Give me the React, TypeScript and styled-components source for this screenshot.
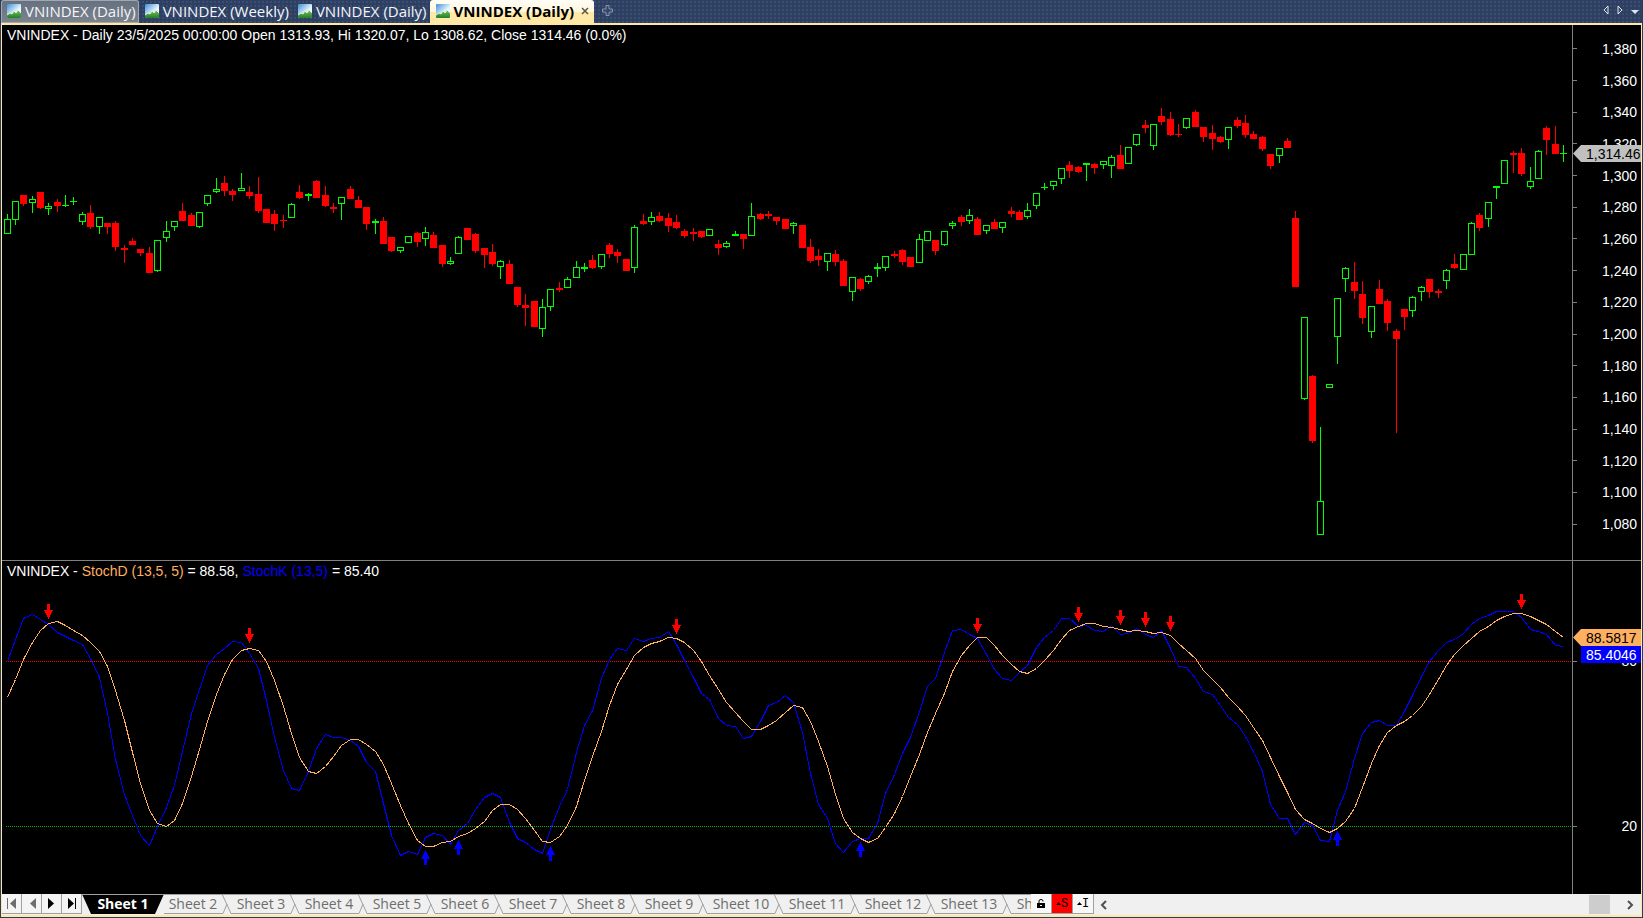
import React from "react";
import styled, { createGlobalStyle, css } from "styled-components";

const GlobalStyle = createGlobalStyle`
  *, *::before, *::after { box-sizing: border-box; }
  html, body { margin: 0; padding: 0; background: #2b3c5b; }
  button { font: inherit; color: inherit; border: 0; padding: 0; margin: 0; background: none; cursor: pointer; }
`;

const UI_FONT = `"Open Sans", "Noto Sans", sans-serif`;
const CHART_FONT = `"Liberation Sans", Arial, sans-serif`;

/* ---------- data ---------- */

// "g" = rising (hollow), "r" = falling (solid); open/close body then high/low wick
type Candle = ["g" | "r", number, number, number, number];

const CANDLES: Candle[] = [
  ["g",219,234,214,234],["g",201,220,201,225],["r",195,204,195,206],["g",199,203,196,213],["r",192,208,192,209],
  ["g",206,209,203,215],["r",202,206,199,212],["g",205,206,195,207],["g",201,202,197,205],["g",214,222,212,225],
  ["r",213,227,205,229],["g",217,227,217,234],["r",223,227,223,234],["r",223,247,221,251],["r",248,250,245,263],
  ["r",241,245,238,245],["r",249,253,249,256],["r",253,273,247,273],["g",240,271,240,272],["g",231,238,221,242],
  ["g",221,227,221,231],["r",211,221,203,221],["r",215,226,213,226],["g",212,227,212,228],["g",195,204,195,206],
  ["g",189,192,178,193],["r",183,191,176,196],["r",191,195,189,201],["g",188,191,173,191],["r",192,196,186,199],
  ["r",194,211,177,213],["r",209,223,209,223],["r",214,224,210,231],["r",220,221,215,228],["g",204,218,203,218],
  ["r",192,198,185,199],["g",194,196,193,201],["r",181,198,180,198],["r",195,206,186,207],["r",207,209,203,213],
  ["g",197,204,197,220],["r",189,199,186,199],["r",200,208,196,208],["r",207,224,207,230],["g",221,223,219,234],
  ["r",221,244,217,244],["r",237,251,237,252],["g",247,251,247,253],["g",236,243,236,243],["r",233,242,232,247],
  ["g",232,239,227,246],["r",235,248,232,248],["r",245,264,245,267],["g",261,264,257,265],["g",237,254,236,254],
  ["r",228,240,228,240],["r",234,251,233,253],["r",248,255,248,268],["r",252,264,244,266],["g",261,267,260,279],
  ["r",264,284,260,284],["r",287,305,287,307],["r",305,308,294,326],["r",301,327,301,327],["g",307,329,299,337],
  ["g",289,307,289,311],["r",288,290,282,292],["g",279,288,277,288],["g",267,278,261,278],["g",267,269,263,272],
  ["r",260,268,255,269],["g",254,267,254,269],["r",245,254,243,258],["r",252,256,249,263],["r",259,271,259,271],
  ["g",227,268,225,273],["r",221,224,214,225],["g",217,222,212,225],["r",216,221,212,222],["r",218,226,213,232],
  ["r",222,228,215,229],["r",231,236,229,238],["r",232,234,228,241],["r",231,237,231,238],["g",229,236,229,236],
  ["r",244,248,240,255],["g",243,247,241,248],["g",234,236,231,236],["r",234,239,234,249],["g",216,236,203,236],
  ["r",214,219,213,220],["r",214,216,211,219],["r",217,221,217,225],["r",219,229,219,229],["g",223,226,222,234],
  ["r",225,248,225,248],["r",247,261,239,263],["r",256,260,249,266],["g",253,262,253,271],["r",254,262,250,266],
  ["r",261,286,259,286],["g",277,292,277,301],["r",279,289,278,291],["g",276,282,275,284],["g",267,269,263,277],
  ["g",256,268,256,271],["r",254,256,251,258],["r",250,262,249,265],["r",257,267,257,267],["g",239,263,234,263],
  ["g",231,241,231,241],["r",240,251,240,255],["g",231,245,231,246],["g",223,226,221,229],["r",217,222,215,226],
  ["g",215,221,209,224],["r",219,235,217,235],["g",225,231,225,234],["r",222,229,219,229],["g",222,228,222,233],
  ["r",211,214,207,217],["r",212,220,210,220],["g",210,217,203,219],["g",193,206,193,209],["g",187,188,183,190],
  ["g",181,186,181,190],["g",168,179,168,184],["r",165,171,161,178],["r",167,172,166,173],["g",163,165,163,181],
  ["r",164,168,163,174],["g",161,165,161,169],["g",157,166,155,178],["r",155,169,145,169],["g",147,164,147,164],
  ["g",134,145,134,146],["r",125,128,120,133],["g",124,146,124,150],["r",116,122,108,125],["r",119,135,112,136],
  ["r",134,135,124,137],["g",118,128,118,129],["r",112,127,110,127],["r",127,137,127,142],["r",133,139,125,150],
  ["r",137,142,136,143],["g",127,140,127,149],["r",120,126,117,128],["r",123,135,115,138],["r",134,139,131,139],
  ["r",137,149,136,151],["r",154,166,154,169],["g",148,156,148,163],["r",141,148,138,148],["r",218,287,211,287],
  ["g",317,399,317,400],["r",376,441,375,443],["g",501,535,427,535],["g",384,388,384,388],["g",298,337,298,364],
  ["g",268,279,267,292],["r",282,291,262,299],["r",294,318,281,324],["g",306,332,306,338],["r",289,304,280,304],
  ["r",301,323,299,331],["r",331,339,329,433],["r",309,317,309,330],["g",297,311,296,317],["g",287,292,286,301],
  ["r",279,292,279,298],["r",291,293,289,298],["g",270,281,269,289],["r",264,268,254,269],["g",254,270,254,270],
  ["g",223,255,222,255],["r",215,228,213,231],["g",202,219,202,227],["g",186,188,186,199],["g",160,184,160,184],
  ["r",153,155,151,173],["r",153,174,148,176],["g",181,187,167,189],["g",151,179,150,179],["r",128,140,126,155],
  ["r",144,154,126,154],["g",153,154,145,162],
];

const STOCH_K = [
  661,639,618,614,619,624,632,636,640,644,658,677,713,759,794,815,835,845,826,807,785,751,713,689,665,
  654,648,641,642,653,668,700,737,770,788,790,771,748,734,737,737,740,746,762,771,803,835,855,851,854,
  837,833,835,844,830,823,809,797,793,797,822,838,842,849,853,829,806,789,752,725,710,678,659,648,650,
  638,641,638,637,631,644,660,677,693,699,718,725,726,738,736,721,705,702,695,702,732,773,804,818,843,
  852,841,838,838,823,793,774,753,737,711,686,678,652,630,629,634,638,654,669,678,680,672,665,647,637,
  630,618,618,626,625,630,631,625,634,633,628,634,637,630,648,666,667,678,691,694,705,717,724,736,751,
  771,804,818,818,834,822,825,840,841,810,791,758,733,722,720,725,725,711,695,676,661,650,642,639,633,
  624,618,615,611,611,611,617,629,631,634,645,646,
];

// The slow line is the five-bar mean of the fast one; the first bars need a seed.
const STOCH_D = STOCH_K.map((_, i) =>
  i < 4
    ? [697, 679, 659, 642][i]
    : Math.round(STOCH_K.slice(i - 4, i + 1).reduce((a, b) => a + b, 0) / 5)
);

const SELL_SIGNALS: [number, number][] = [
  [5,604],[29,628],[80,619],[116,618],[128,607],[133,610],[136,612],[139,616],[181,594],
];
const BUY_SIGNALS: [number, number][] = [[50,850],[54,840],[65,846],[102,842],[159,831]];

const PRICE_LEVELS = Array.from({ length: 16 }, (_, i) => (1380 - i * 20).toLocaleString("en-US"));

// 19 bars take 159 units of width
const barX = (i: number) => 7 + Math.floor((i * 159) / 19);
const linePoints = (ys: number[]) => ys.map((y, i) => `${barX(i) + 0.5},${y + 0.5}`).join(" ");

/* ---------- frame ---------- */

const Frame = styled.main`
  display: flex;
  flex-direction: column;
  height: 100vh;
  min-height: 480px;
  overflow: hidden;
  padding: 0 1px 1px;
  background: #2b3c5b;
`;

const TabStrip = styled.header`
  display: flex;
  flex: none;
  height: 23px;
  align-items: stretch;
  background-color: #2e4061;
  background-image: radial-gradient(#3a4d72 1px, transparent 1px);
  background-size: 4px 4px;
  font: 15px/20px ${UI_FONT};
  color: #f4f6fa;
`;

const DocTab = styled.button<{ $look: "hover" | "plain" | "active" }>`
  display: flex;
  align-items: center;
  gap: 4px;
  padding: 0 3px 2px 6px;
  white-space: nowrap;
  ${(p) =>
    p.$look === "hover" &&
    css`
      border-radius: 3px 3px 0 0;
      background: linear-gradient(#66707f, #7b838c);
      box-shadow: inset 0 0 0 1px #a0a8b3;
    `}
  ${(p) =>
    p.$look === "active" &&
    css`
      border-radius: 3px 3px 0 0;
      background: linear-gradient(#fffdf6 0, #fff6dc 50%, #ffe9a8 51%, #ffe8a6 100%);
      color: #000;
      font-weight: 700;
    `}
`;

const CloseMark = styled.svg`
  margin: 0 2px 0 3px;
`;

const AddTab = styled.button`
  display: flex;
  align-items: center;
  padding: 0 8px 2px;
`;

const StripTools = styled.div`
  display: flex;
  align-items: center;
  gap: 8px;
  margin-left: auto;
  padding: 0 3px 3px 0;
`;

const ToolButton = styled.button`
  display: flex;
`;

const Workspace = styled.section`
  display: flex;
  flex: 1;
  min-height: 0;
  flex-direction: column;
  border: solid #ffe8a6;
  border-width: 2px 1px;
  background: #000;
`;

/* ---------- chart panes ---------- */

const Pane = styled.section<{ $weight: number; $divided?: boolean }>`
  display: grid;
  grid-template-columns: minmax(0, 1fr) 69px;
  flex: ${(p) => p.$weight} 1 0;
  min-height: 0;
  color: #fff;
  font: 14px/20px ${CHART_FONT};
  ${(p) => p.$divided && css`border-top: 1px solid #808080;`}
`;

const Plot = styled.div`
  position: relative;
  min-width: 0;
  min-height: 0;
`;

const PlotCanvas = styled.svg`
  position: absolute;
  inset: 0;
  width: 100%;
  height: 100%;
  shape-rendering: crispEdges;
`;

const PaneTitle = styled.h2`
  position: relative;
  margin: 0;
  padding-left: 5px;
  font: inherit;
  white-space: nowrap;
`;

const SeriesName = styled.span<{ $color: string }>`
  color: ${(p) => p.$color};
`;

const Axis = styled.div<{ $rows: string }>`
  position: relative;
  display: grid;
  grid-template-rows: ${(p) => p.$rows};
  min-height: 0;
  border-left: 1px solid #808080;
`;

const Scale = styled.ol`
  display: flex;
  flex-direction: column;
  justify-content: space-between;
  grid-row: 2;
  margin: 0;
  padding: 0;
  list-style: none;
`;

const Level = styled.li<{ $fill?: boolean }>`
  display: flex;
  flex: ${(p) => (p.$fill ? "1 1 0" : "none")};
  align-items: center;
  justify-content: space-between;
  height: 22px;
  padding-right: 4px;
  &::before {
    content: "";
    width: 4px;
    height: 1px;
    background: #808080;
  }
`;

const TagStack = styled.div`
  position: absolute;
  left: 0;
  right: 0;
  margin-top: -9px;
`;

const ValueTag = styled.div<{ $bg: string; $fg: string; $pointer?: boolean }>`
  height: 17px;
  padding-left: 13px;
  line-height: 18px;
  white-space: nowrap;
  color: ${(p) => p.$fg};
  background: ${(p) => p.$bg};
  clip-path: ${(p) =>
    p.$pointer
      ? "polygon(0 50%, 8px 0, 100% 0, 100% 100%, 8px 100%)"
      : "polygon(8px 0, 100% 0, 100% 100%, 8px 100%)"};
`;

/* ---------- sheet bar ---------- */

const SheetBar = styled.footer`
  display: flex;
  flex: none;
  height: 21px;
  background: #f0f0f0;
  font: 14px/18px ${UI_FONT};
  color: #6d6d6d;
`;

const NavButton = styled.button`
  display: flex;
  align-items: center;
  justify-content: center;
  width: 20px;
  height: 20px;
  border: solid #a0a0a0;
  border-width: 0 1px 1px 0;
  background: #f4f4f4;
`;

const SheetTabs = styled.nav`
  display: flex;
  flex: none;
  width: 949px;
  height: 20px;
  overflow: hidden;
  border-top: 1px solid #a0a0a0;
`;

const SheetTab = styled.button<{ $long?: boolean }>`
  flex: none;
  width: ${(p) => (p.$long ? 66 : 58)}px;
  border-bottom: 1px solid #a0a0a0;
  text-align: center;
  white-space: nowrap;
`;

const CurrentSheet = styled.button`
  flex: none;
  width: 82px;
  margin-top: -1px;
  background: #000;
  clip-path: polygon(0 0, 100% 0, calc(100% - 9px) 100%, 9px 100%);
  color: #fff;
  font-weight: 700;
`;

const Slant = styled.svg`
  flex: none;
`;

const ToggleButton = styled.button<{ $alert?: boolean }>`
  display: flex;
  align-items: center;
  justify-content: center;
  width: 21px;
  height: 20px;
  border: solid #a0a0a0;
  border-width: 0 1px 1px 0;
  background: ${(p) => (p.$alert ? "#ff0000" : "#f8f8f8")};
  color: #000;
  font: 12px/18px "Liberation Mono", monospace;
`;

const ScrollTrack = styled.div`
  display: flex;
  flex: 1;
  align-items: center;
  justify-content: space-between;
  padding: 1px 7px 1px 6px;
`;

const ScrollEnd = styled.div`
  display: flex;
  gap: 17px;
  align-items: center;
`;

const ScrollThumb = styled.div`
  width: 21px;
  height: 19px;
  background: #cdcdcd;
`;

/* ---------- drawings ---------- */

const ChartIcon = () => (
  <svg width="14" height="14" viewBox="0 0 14 14" aria-hidden="true">
    <defs>
      <linearGradient id="sky" x1="0" y1="0" x2="1" y2="1">
        <stop offset="0" stopColor="#3f8fd8" />
        <stop offset="0.6" stopColor="#e8f6ff" />
        <stop offset="1" stopColor="#ffffff" />
      </linearGradient>
      <linearGradient id="hill" x1="0" y1="0" x2="0" y2="1">
        <stop offset="0" stopColor="#7cc84c" />
        <stop offset="1" stopColor="#1f7d2c" />
      </linearGradient>
    </defs>
    <rect width="14" height="14" rx="1" fill="url(#sky)" />
    <path d="M0 11 L3 9 L5 10 L7 7 L9 9 L11 6 L14 9 V13 Q14 14 13 14 H1 Q0 14 0 13Z" fill="url(#hill)" />
    <path d="M0 11 L3 9 L5 10 L7 7 L9 9 L11 6 L14 9" fill="none" stroke="#d9f0e4" strokeWidth="1" />
  </svg>
);

const NavIcon = ({ kind }: { kind: "first" | "prev" | "next" | "last" }) => {
  const back = kind === "first" || kind === "prev";
  return (
    <svg width="10" height="11" viewBox="0 0 10 11" fill={back ? "#6d6d6d" : "#000"} aria-hidden="true">
      {back ? <path d="M9 0V11L3 5.5Z" /> : <path d="M1 0V11L7 5.5Z" />}
      {kind === "first" && <rect x="0" width="1" height="11" />}
      {kind === "last" && <rect x="8" width="1" height="11" />}
    </svg>
  );
};

const Candlestick = ({ index, candle }: { index: number; candle: Candle }) => {
  const [dir, top, bottom, high, low] = candle;
  const x = barX(index);
  const color = dir === "g" ? "#00ff00" : "#ff0000";
  return (
    <g fill={color}>
      {high < top && <rect x={x} y={high} width="1" height={top - high} />}
      {low > bottom && <rect x={x} y={bottom} width="1" height={low - bottom} />}
      <rect x={x - 3} y={top} width="7" height={bottom - top} />
      {dir === "g" && bottom - top > 2 && (
        <rect x={x - 2} y={top + 1} width="5" height={bottom - top - 2} fill="#000" />
      )}
    </g>
  );
};

const SellArrow = ({ x, y }: { x: number; y: number }) => (
  <path
    fill="#ff0000"
    d={`M${x - 1} ${y}h3v6h3v1h-1v2h-1v2h-1v2h-1v2h-1v-2h-1v-2h-1v-2h-1v-2h-1v-1h3z`}
  />
);

const BuyArrow = ({ x, y }: { x: number; y: number }) => (
  <path
    fill="#0000ff"
    d={`M${x} ${y}h1v2h1v2h1v2h1v2h1v1h-3v6h-3v-6h-3v-1h1v-2h1v-2h1v-2h1z`}
  />
);

const PricePane = () => (
  <Pane $weight={535}>
    <Plot>
      <PlotCanvas viewBox="2 25 1570 535" preserveAspectRatio="none" role="img" aria-label="Daily candles">
        {CANDLES.map((c, i) => (
          <Candlestick key={i} index={i} candle={c} />
        ))}
      </PlotCanvas>
      <PaneTitle>
        VNINDEX - Daily 23/5/2025 00:00:00 Open 1313.93, Hi 1320.07, Lo 1308.62, Close 1314.46 (0.0%)
      </PaneTitle>
    </Plot>
    <Axis $rows="8fr 507fr 20fr">
      <Scale>
        {PRICE_LEVELS.map((p) => (
          <Level key={p} $fill>
            {p}
          </Level>
        ))}
      </Scale>
      <TagStack style={{ top: `${(129 / 535) * 100}%` }}>
        <ValueTag $bg="#c0c0c0" $fg="#000" $pointer>
          1,314.46
        </ValueTag>
      </TagStack>
    </Axis>
  </Pane>
);

const StochPane = () => (
  <Pane $weight={333} $divided>
    <Plot>
      <PlotCanvas viewBox="2 561 1570 333" preserveAspectRatio="none" role="img" aria-label="Stochastic oscillator">
        <line x1="6" x2="1572" y1="661.5" y2="661.5" stroke="#ff0000" strokeDasharray="1 1" />
        <line x1="6" x2="1572" y1="826.5" y2="826.5" stroke="#00b400" strokeDasharray="1 1" />
        <polyline points={linePoints(STOCH_K)} fill="none" stroke="#0000ff" />
        <polyline points={linePoints(STOCH_D)} fill="none" stroke="#ffaf60" />
        {SELL_SIGNALS.map(([i, y]) => (
          <SellArrow key={i} x={barX(i)} y={y} />
        ))}
        {BUY_SIGNALS.map(([i, y]) => (
          <BuyArrow key={i} x={barX(i)} y={y} />
        ))}
      </PlotCanvas>
      <PaneTitle>
        VNINDEX - <SeriesName $color="#ffaf60">StochD (13,5, 5)</SeriesName> = 88.58,{" "}
        <SeriesName $color="#0000ff">StochK (13,5)</SeriesName> = 85.40
      </PaneTitle>
    </Plot>
    <Axis $rows="89fr 187fr 57fr">
      <Scale>
        <Level>80</Level>
        <Level>20</Level>
      </Scale>
      <TagStack style={{ top: `${(77 / 333) * 100}%` }}>
        <ValueTag $bg="#ffaf60" $fg="#000" $pointer>
          88.5817
        </ValueTag>
        <ValueTag $bg="#0000ff" $fg="#fff">
          85.4046
        </ValueTag>
      </TagStack>
    </Axis>
  </Pane>
);

const SheetEdge = () => (
  <Slant width="10" height="19" viewBox="0 0 10 19" fill="none" stroke="#a0a0a0" aria-hidden="true">
    <path d="M0.500 0L9 18.500H10M0 18.500H1L5 9" />
  </Slant>
);

const App = () => (
  <Frame>
    <GlobalStyle />
    <TabStrip>
      <DocTab $look="hover"><ChartIcon />VNINDEX (Daily)</DocTab>
      <DocTab $look="plain"><ChartIcon />VNINDEX (Weekly)</DocTab>
      <DocTab $look="plain"><ChartIcon />VNINDEX (Daily)</DocTab>
      <DocTab $look="active">
        <ChartIcon />
        VNINDEX (Daily)
        <CloseMark width="8" height="8" viewBox="0 0 8 8" stroke="#5c5540" strokeWidth="1.500" aria-hidden="true">
          <path d="M1 1L7 7M7 1L1 7" />
        </CloseMark>
      </DocTab>
      <AddTab aria-label="New tab">
        <svg width="11" height="11" viewBox="0 0 11 11" fill="none" stroke="#8b96aa">
          <path d="M4 0.500H7V4H10.500V7H7V10.500H4V7H0.500V4H4Z" />
        </svg>
      </AddTab>
      <StripTools>
        <ToolButton aria-label="Scroll tabs left">
          <svg width="6" height="10" viewBox="0 0 6 10" fill="none" stroke="#dfe5ee"><path d="M5 1V9L1 5Z" /></svg>
        </ToolButton>
        <ToolButton aria-label="Scroll tabs right">
          <svg width="6" height="10" viewBox="0 0 6 10" fill="none" stroke="#dfe5ee"><path d="M1 1V9L5 5Z" /></svg>
        </ToolButton>
        <ToolButton aria-label="Tab list">
          <svg width="8" height="10" viewBox="0 0 8 10" fill="#dfe5ee"><path d="M0 5H8L4 9Z" /></svg>
        </ToolButton>
      </StripTools>
    </TabStrip>
    <Workspace>
      <PricePane />
      <StochPane />
      <SheetBar>
        <NavButton aria-label="First sheet"><NavIcon kind="first" /></NavButton>
        <NavButton aria-label="Previous sheet"><NavIcon kind="prev" /></NavButton>
        <NavButton aria-label="Next sheet"><NavIcon kind="next" /></NavButton>
        <NavButton aria-label="Last sheet"><NavIcon kind="last" /></NavButton>
        <SheetTabs>
          <CurrentSheet>Sheet 1</CurrentSheet>
          {Array.from({ length: 13 }, (_, i) => i + 2).map((n) => (
            <React.Fragment key={n}>
              {n > 2 && <SheetEdge />}
              <SheetTab $long={n > 9}>Sheet {n}</SheetTab>
            </React.Fragment>
          ))}
        </SheetTabs>
        <ToggleButton aria-label="Lock">
          <svg width="8" height="9" viewBox="0 0 8 9" aria-hidden="true">
            <rect x="0" y="4" width="8" height="5" fill="#000" />
            <path d="M2 4V2Q2 0.500 4 0.500T6 2V2.500" fill="none" stroke="#000" />
            <rect x="3" y="6" width="2" height="1" fill="#fff" />
          </svg>
        </ToggleButton>
        <ToggleButton $alert>
          <svg width="5" height="3" viewBox="0 0 5 3" aria-hidden="true"><path d="M0 3H5L2.500 0Z" /></svg>S
        </ToggleButton>
        <ToggleButton>
          <svg width="5" height="3" viewBox="0 0 5 3" aria-hidden="true"><path d="M0 3H5L2.500 0Z" /></svg>I
        </ToggleButton>
        <ScrollTrack>
          <ToolButton aria-label="Scroll left">
            <svg width="7" height="10" viewBox="0 0 7 10" fill="none" stroke="#505050" strokeWidth="2"><path d="M6 1L2 5L6 9" /></svg>
          </ToolButton>
          <ScrollEnd>
            <ScrollThumb />
            <ToolButton aria-label="Scroll right">
              <svg width="7" height="10" viewBox="0 0 7 10" fill="none" stroke="#505050" strokeWidth="2"><path d="M1 1L5 5L1 9" /></svg>
            </ToolButton>
          </ScrollEnd>
        </ScrollTrack>
      </SheetBar>
    </Workspace>
  </Frame>
);

export default App;
